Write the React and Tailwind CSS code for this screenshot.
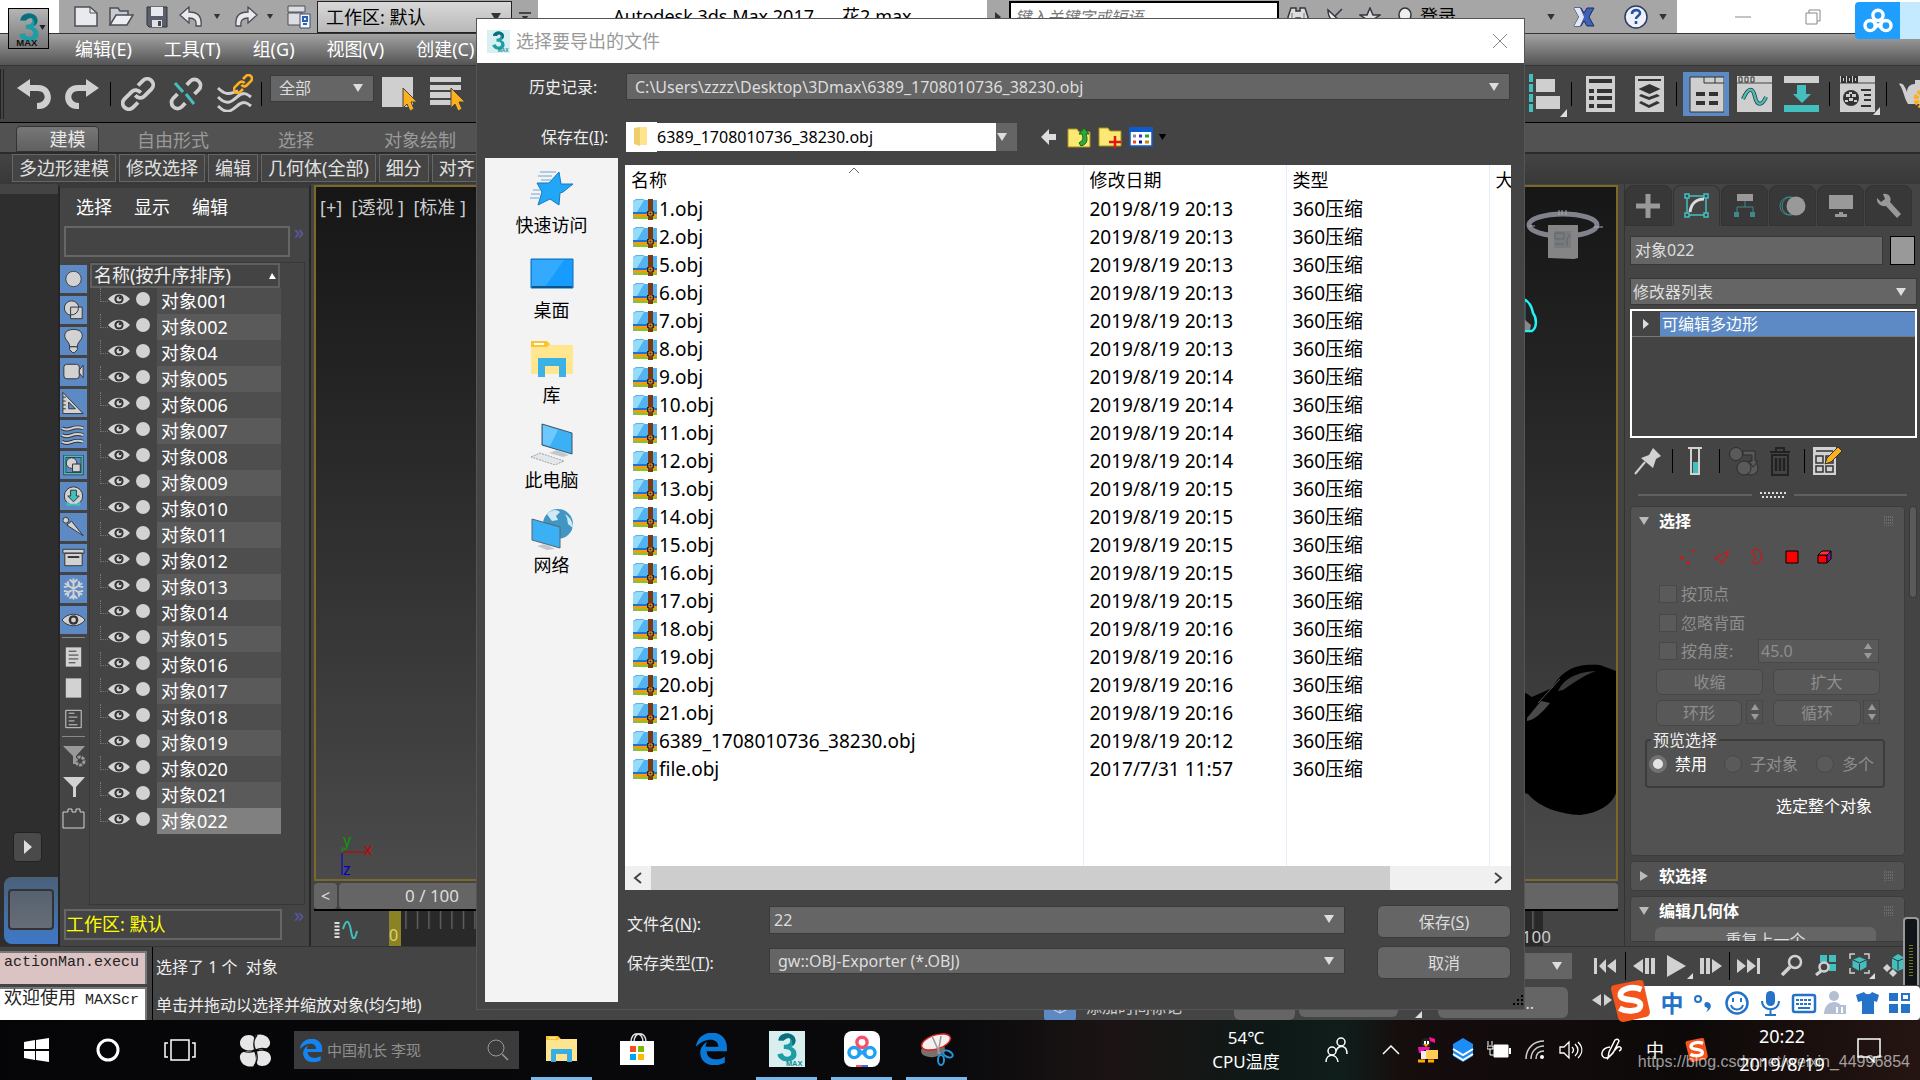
import React, { useState } from "react";

const SANS = "font-['Noto_Sans','Noto_Sans_CJK_SC',sans-serif]";

const objects = ["001", "002", "04", "005", "006", "007", "008", "009", "010", "011", "012", "013", "014", "015", "016", "017", "018", "019", "020", "021", "022"];

const files = [
  ["1.obj", "2019/8/19 20:13"],
  ["2.obj", "2019/8/19 20:13"],
  ["5.obj", "2019/8/19 20:13"],
  ["6.obj", "2019/8/19 20:13"],
  ["7.obj", "2019/8/19 20:13"],
  ["8.obj", "2019/8/19 20:13"],
  ["9.obj", "2019/8/19 20:14"],
  ["10.obj", "2019/8/19 20:14"],
  ["11.obj", "2019/8/19 20:14"],
  ["12.obj", "2019/8/19 20:14"],
  ["13.obj", "2019/8/19 20:15"],
  ["14.obj", "2019/8/19 20:15"],
  ["15.obj", "2019/8/19 20:15"],
  ["16.obj", "2019/8/19 20:15"],
  ["17.obj", "2019/8/19 20:15"],
  ["18.obj", "2019/8/19 20:16"],
  ["19.obj", "2019/8/19 20:16"],
  ["20.obj", "2019/8/19 20:16"],
  ["21.obj", "2019/8/19 20:16"],
  ["6389_1708010736_38230.obj", "2019/8/19 20:12"],
  ["file.obj", "2017/7/31 11:57"],
];

function Svg({ w, h, vb, className = "", children }) {
  return (
    <svg width={w} height={h} viewBox={vb || `0 0 ${w} ${h}`} className={`block shrink-0 ${className}`} fill="none" aria-hidden="true">
      {children}
    </svg>
  );
}

function Tri({ color = "#ddd", w = 10, h = 8, className = "" }) {
  return (
    <Svg w={w} h={h} vb="0 0 10 8" className={className}>
      <path d="M0 0h10L5 8z" fill={color} />
    </Svg>
  );
}

function Combo({ label, value, className = "", textClass = "text-base", pad = "pl-2", arrow = "#ddd" }) {
  return (
    <div className={`relative ${className}`}>
      <select aria-label={label} className={`block h-full w-full appearance-none bg-transparent pr-8 outline-none ${pad} ${textClass}`}>
        <option>{value}</option>
      </select>
      <Tri color={arrow} className="pointer-events-none absolute right-2.5 top-1/2 -mt-1" />
    </div>
  );
}

function MaxLogo({ size, dark }) {
  return (
    <Svg w={size} h={size} vb="0 0 32 34">
      <path d="M8 9C8 0 24 0 24 9c0 4-2 5-4 6 3 1 5 3 5 7 0 9-17 9-18 0l5-1c1 5 8 4 8 0 0-3-3-4-7-4v-4c4 0 6-1 6-4 0-4-5-4-6 0z" fill="#1d9da5" />
      <path d="M8 9C8 0 24 0 24 9c0 2-1 4-3 5 1-7-3-10-8-5z" fill="#0b6f7d" />
      <text x={dark ? "4" : "15"} y="33" fontSize={dark ? "9" : "7"} fontWeight="700" fontFamily="Liberation Sans" fill={dark ? "#111" : "#0f8b93"}>MAX</text>
    </Svg>
  );
}

function Chain({ broken, orange, size = 34 }) {
  const c = orange ? "#fbb01c" : "#cfcfcf";
  return (
    <Svg w={size} h={size} vb="0 0 34 34">
      <g transform="rotate(-45 17 17)" stroke={c} strokeWidth={orange ? "4.500" : "3.800"}>
        {broken ? (
          <path d="M11 11H5a6 6 0 0 0 0 12h5M23 23h6a6 6 0 0 0 0-12h-5" />
        ) : (
          <>
            <path d="M20 18c0-4-2-7-6-7H4a6 6 0 0 0 0 12h7" />
            <path d="M14 16c0 4 2 7 6 7h10a6 6 0 0 0 0-12h-7" />
          </>
        )}
      </g>
      {broken && <path d="M6 6l8 9M17 17l8 10" stroke="#43bfbf" strokeWidth="3" />}
    </Svg>
  );
}

function Cursor() {
  return <path d="M21 12v20l4-4 3 7 4-2-3-7h6z" fill="#fbb01c" stroke="#444" strokeWidth="1" />;
}

function Eye({ w = 22 }) {
  return (
    <Svg w={w} h={12} vb="0 0 22 12">
      <path d="M0 6C6-1 16-1 22 6 16 13 6 13 0 6z" fill="#d4d4d4" />
      <circle cx="11" cy="6" r="4.600" fill="#333" />
      <circle cx="11" cy="6" r="2.500" fill="#d4d4d4" />
      <circle cx="12" cy="5" r="1.300" fill="#333" />
    </Svg>
  );
}

function TitleBar() {
  return (
    <header className="flex h-[34px] items-start justify-between border-b border-[#333] bg-white">
      <div className="flex h-[33px]">
        <div className="relative w-[59px]">
          <button aria-label="应用程序菜单" className="absolute left-2 top-2 z-10 flex h-[41px] w-[41px] items-center justify-center border border-black bg-gradient-to-b from-[#b5b5b5] to-[#777]">
            <MaxLogo size={36} dark />
            <Tri color="#223" w={7} h={5} className="absolute right-0.5 top-4" />
          </button>
        </div>
        <div className="flex items-center bg-[#a6a6a6] pl-3.5">
          <button aria-label="新建" className="w-[35px]">
            <Svg w={25} h={21}><path d="M2 1h15l7 6v13H2z" fill="#e9eaee" stroke="#4d4f56" strokeWidth="1.500" /><path d="M17 1v6h7" stroke="#4d4f56" /></Svg>
          </button>
          <button aria-label="打开" className="w-[38px]">
            <Svg w={26} h={21}><path d="M2 19V2h8l2 3h8v4" fill="#c9cbd2" stroke="#4d4f56" strokeWidth="1.500" /><path d="M2 19l6-10h17l-6 10z" fill="#eceef2" stroke="#4d4f56" strokeWidth="1.500" /></Svg>
          </button>
          <button aria-label="保存" className="w-[33px]">
            <Svg w={22} h={22}><path d="M1 1h20v20H3l-2-2z" fill="#5a5f6b" stroke="#33353b" /><path d="M5 1h12v9H5z" fill="#e9eaee" /><path d="M6 14h10v7H6z" fill="#dfe1e6" /><path d="M12 15h3v5h-3z" fill="#444" /></Svg>
          </button>
          <button aria-label="撤消" className="w-[34px]">
            <Svg w={25} h={22}><path d="M10 1v5c9 0 13 4 12 14h-5c1-6-2-8-7-8v5L1 9z" fill="#e9eaee" stroke="#4d4f56" strokeWidth="1.300" /></Svg>
          </button>
          <Tri color="#333" w={8} h={5} />
          <button aria-label="重做" className="ml-3 w-[33px]">
            <Svg w={25} h={22}><path d="M15 1v5C6 6 2 10 3 20h5c-1-6 2-8 7-8v5l9-8z" fill="#e9eaee" stroke="#4d4f56" strokeWidth="1.300" /></Svg>
          </button>
          <Tri color="#333" w={8} h={5} />
          <button aria-label="项目" className="ml-3 w-[31px]">
            <Svg w={26} h={24}><path d="M2 1h17v6H2zM2 8h14v12H2z" fill="#dcdee3" stroke="#4d4f56" /><path d="M14 9h10v14H14z" fill="#f3f5f9" stroke="#3c4d75" /><path d="M17 12h4v4h-4zM17 19h4" stroke="#2a62b8" strokeWidth="2" /></Svg>
          </button>
          <Combo label="工作区" value="工作区: 默认" arrow="#333" textClass="text-lg text-black" className="h-8 w-[195px] border border-[#222] bg-gradient-to-b from-[#d9d9d9] to-[#b8b8b8]" />
          <div className="flex w-[26px] flex-col items-center gap-0.5">
            <span className="h-0.5 w-3 bg-[#444]" />
            <Tri color="#333" w={10} h={5} />
          </div>
        </div>
      </div>
      <h1 className="whitespace-pre text-[18px] leading-8 text-black">{"Autodesk 3ds Max 2017      花2.max"}</h1>
      <div className="flex h-[33px]">
        <div className="flex items-center bg-[#a6a6a6]">
          <Svg w={22} h={12}><path d="M8 1v10l6-5z" fill="#333" /></Svg>
          <input aria-label="搜索" placeholder="键入关键字或短语" className="h-8 w-[270px] border-2 border-black bg-white px-1 text-base italic placeholder:text-[#777]" />
          <button aria-label="搜索帮助" className="ml-2 w-[39px]">
            <Svg w={22} h={20}><path d="M4 1h5v3h4V1h5l3 9v9h-8v-8H9v8H1v-9z" fill="#ddd" stroke="#33363d" strokeWidth="1.500" /><path d="M5 6v12M17 6v12" stroke="#777" /></Svg>
          </button>
          <button aria-label="通信中心" className="w-[33px]">
            <Svg w={20} h={20}><path d="M2 3c0 9 6 13 14 13zM9 9l7-7" fill="#eee" stroke="#33363d" strokeWidth="1.500" /></Svg>
          </button>
          <button aria-label="收藏夹" className="w-[39px]">
            <Svg w={22} h={20}><path d="M11 1l3 7h7l-6 4 2 7-6-4-6 4 2-7-6-4h7z" fill="#ddd" stroke="#33363d" strokeWidth="1.500" /></Svg>
          </button>
          <Svg w={14} h={20}><ellipse cx="7" cy="8" rx="6" ry="7" fill="#eee" stroke="#33363d" strokeWidth="1.500" /></Svg>
          <button className="ml-2 mr-[91px] text-[18px] text-black">登录</button>
          <Tri color="#333" w={8} h={6} />
          <Svg w={22} h={22} className="ml-[18px]"><path d="M1 2h7l3 5 3-5h7l-5 9 5 9h-7l-3-5-3 5H1l5-9z" fill="#3f63b4" stroke="#1d2d66" /><path d="M1 2h6l4 9-4 9H1l5-9z" fill="#e4e8f3" /></Svg>
          <Svg w={26} h={24} className="ml-[28px]"><circle cx="13" cy="12" r="11" fill="#eef1f7" stroke="#2c3c62" strokeWidth="1.500" /><path d="M9 9c0-5 8-5 8-1 0 3-4 3-4 6M13 16v3" stroke="#2353a8" strokeWidth="2.600" /></Svg>
          <Tri color="#333" w={8} h={6} className="mx-2.5" />
        </div>
        <button aria-label="最小化" className="ml-6 w-[84px] pl-[34px]">
          <Svg w={16} h={2}><path d="M0 1h16" stroke="#888" /></Svg>
        </button>
        <button aria-label="还原" className="mr-[99px] pl-5">
          <Svg w={16} h={16}><path d="M1 4h11v11H1zM4 4V1h11v11h-3" stroke="#888" /></Svg>
        </button>
      </div>
    </header>
  );
}

function MenuBar() {
  return (
    <nav className="flex h-8 items-center gap-8 border-b border-[#333] bg-gradient-to-b from-[#a3a3a3] to-[#555] pl-[75px] text-[18px] text-white">
      {["编辑(E)", "工具(T)", "组(G)", "视图(V)", "创建(C)"].map((m) => (
        <button key={m}>{m}</button>
      ))}
    </nav>
  );
}

function Sep({ className = "" }) {
  return <span className={`h-6 w-px shrink-0 bg-black ${className}`} />;
}

function Toolbar() {
  return (
    <div className="flex h-[57px] items-center justify-between border-b border-black bg-[#444]">
      <div className="flex items-center">
        <span className="h-[50px] w-1 border-x border-[#222]" />
        <button aria-label="撤消" className="ml-3"><Svg w={36} h={32}><path d="M1 10L14 1v6h8c17 0 17 24 1 24h-2v-6c10 0 10-12 1-12h-8v6z" fill="#cfcfcf" /></Svg></button>
        <button aria-label="重做" className="ml-3"><Svg w={36} h={32}><path d="M35 10L22 1v6h-8c-17 0-17 24-1 24h2v-6c-10 0-10-12-1-12h8v6z" fill="#cfcfcf" /></Svg></button>
        <Sep className="mx-2.5" />
        <button aria-label="链接"><Chain /></button>
        <button aria-label="取消链接" className="ml-3.5"><Chain broken /></button>
        <button aria-label="绑定到空间扭曲" className="relative ml-3.5">
          <Svg w={36} h={36}><path d="M1 12c9 9 13 5 20 3M1 21c9 9 13 5 19 0s9-4 14 0M1 30c9 9 13 5 19 0s9-4 14 0" stroke="#cfcfcf" strokeWidth="3" /></Svg>
          <span className="absolute -top-0.5 left-4"><Chain orange size={20} /></span>
        </button>
        <Sep className="mx-2" />
        <Combo label="选择过滤器" value="全部" className="mb-3 h-[27px] w-[104px] border border-[#3a3a3a] bg-[#656565]" textClass="text-base text-[#ddd]" />
        <button aria-label="选择对象" className="ml-2"><Svg w={36} h={36}><path d="M0 1h31v30H0z" fill="#cfcfcf" /><Cursor /></Svg></button>
        <button aria-label="按名称选择" className="ml-3"><Svg w={36} h={36}><path d="M0 1h31v5H0zM0 9h31v5H0zM0 16h26v6H0zM0 24h26v5H0z" fill="#cfcfcf" /><Cursor /></Svg></button>
      </div>
      <div className="flex w-[393px] items-center overflow-hidden">
        <Svg w={40} h={46}><path d="M4 3v38" stroke="#43bfbf" strokeWidth="4" strokeDasharray="8 2" /><path d="M9 8h19v13H9zM9 25h24v13H9z" fill="#cfcfcf" /><path d="M40 38v8h-7z" fill="#ddd" /></Svg>
        <Sep className="ml-1 mr-3.5" />
        <Svg w={29} h={36}><path d="M0 0h29v36H0z" fill="#cfcfcf" /><path d="M3 5h23M3 15h5M11 15h15M3 22h5M11 22h15M3 30h5M11 30h15" stroke="#333" strokeWidth="4" /></Svg>
        <Svg w={29} h={36} className="ml-5"><path d="M0 0h29v36H0z" fill="#cfcfcf" /><path d="M3 4h23" stroke="#333" strokeWidth="2" /><path d="M14.500 8l11 5-11 5-11-5zM4 20l10 4 11-4-3-2-8 3-8-3zM4 27l10 5 11-5-3-2-8 4-8-4z" fill="#333" /></Svg>
        <Sep className="ml-3 mr-1.5" />
        <button aria-label="切换功能区" className="flex h-[56px] w-[46px] shrink-0 items-center justify-center rounded bg-[#5d8ac4] bg-clip-content py-1.5">
          <Svg w={35} h={37}><path d="M1 1h34v35H1z" fill="#cfcfcf" stroke="#333" /><path d="M15 1v6h20M26 1v6" stroke="#333" /><path d="M7 18h9M20 18h9M7 27h9M20 27h9" stroke="#333" strokeWidth="4" /></Svg>
        </button>
        <Svg w={35} h={36} className="ml-2"><path d="M0 0h35v36H0z" fill="#cfcfcf" /><path d="M0 7h35" stroke="#444" /><path d="M2 1h3v5H2zM8 1h3v5H8zM14 1h3v5h-3z" stroke="#333" /><path d="M6 23c6-13 10-11 12-2s7 9 11 0" stroke="#333" strokeWidth="4" /><path d="M6 23c6-13 10-11 12-2s7 9 11 0" stroke="#43bfbf" strokeWidth="2.500" /></Svg>
        <Svg w={35} h={36} className="ml-3"><path d="M0 0h35v7H0z" fill="#cfcfcf" /><path d="M0 29h35v7H0zM13 9h9v9h5l-9 9-9-9h4z" fill="#43bfbf" /></Svg>
        <Sep className="mx-2.5" />
        <Svg w={40} h={42}><path d="M0 3h35v36H0z" fill="#cfcfcf" /><path d="M0 10h35" stroke="#444" /><path d="M2 4h3v5H2zM8 4h3v5H8zM14 4h3v5h-3zM21 17h10M24 22h7M24 27h7M21 33h10" stroke="#333" strokeWidth="2" /><circle cx="11" cy="25" r="8" fill="#333" /><path d="M6 21h4v3H6zM12 21h4v3h-4zM9 25h4v3H9zM5 27h3v2H5zM14 27h3v2h-3zM9 19h3v2H9z" fill="#cfcfcf" /><path d="M40 34v8h-7z" fill="#ddd" /></Svg>
        <Sep className="ml-1.5 mr-3" />
        <Svg w={40} h={36}><path d="M0 8c4-2 6 3 8 8 0-5 3-8 8-8V4h5v4c8 1 12 9 8 20H9C5 22 4 12 0 8z" fill="#cfcfcf" /><circle cx="24" cy="23" r="7" stroke="#fbb01c" strokeWidth="5" strokeDasharray="4 1.500" /></Svg>
      </div>
    </div>
  );
}

function Ribbon() {
  return (
    <div className="bg-[#444] text-[18px]">
      <div className="flex h-[31px] items-end border-b-2 border-[#2b2b2b] bg-[#525252] pl-4 text-[#9a9a9a]">
        <button className="h-[26px] w-[83px] rounded-t border border-[#333] bg-gradient-to-b from-[#777] to-[#606060] pl-5 leading-6 text-[#e8e8e8]">建模</button>
        <div className="flex items-center pl-[38px] leading-6">
          <button className="w-[141px] text-left">自由形式</button>
          <button className="w-[106px] text-left">选择</button>
          <button>对象绘制</button>
        </div>
      </div>
      <div className="flex h-[30px] gap-[3px] bg-gradient-to-b from-[#444] to-[#383838] pl-3 text-[#e0e0e0]">
        {["多边形建模", "修改选择", "编辑", "几何体(全部)", "细分", "对齐"].map((t) => (
          <button key={t} className="h-7 whitespace-nowrap border border-[#666] bg-[#444] px-1.5 leading-6">{t}</button>
        ))}
      </div>
    </div>
  );
}

const filterIcons = [
  <circle key="a" cx="14" cy="14" r="8" fill="#d2d2d2" stroke="#444" />,
  <g key="b" fill="#d2d2d2" stroke="#333"><circle cx="12" cy="12" r="7.500" /><path d="M11 11h12v12H11z" /><path d="M11 19a7 7 0 0 0 8-8" /></g>,
  <g key="c" fill="#d2d2d2" stroke="#333"><path d="M14 2C4 2 4 9 6 12c2 3 4 4 4 8h8c0-4 2-5 4-8 2-3 2-10-8-10z" /><path d="M10 20h8v3l-3 3h-2l-3-3z" /></g>,
  <g key="d" fill="#d2d2d2" stroke="#333"><rect x="4" y="6" width="16" height="15" rx="3" /><path d="M20 12l4-5v13l-4-5z" /></g>,
  <g key="e" fill="#d2d2d2" stroke="#333"><path d="M3 3v22h21zM9 13v7h7z" fillRule="evenodd" /><path d="M3 8h3M3 12h3M3 16h3M3 20h3" /></g>,
  <g key="f"><path d="M2 8c8 5 10-4 22 0M2 15c8 5 10-4 22 0M2 22c8 5 10-4 22 0" stroke="#333" strokeWidth="4" /><path d="M2 8c8 5 10-4 22 0M2 15c8 5 10-4 22 0M2 22c8 5 10-4 22 0" stroke="#d2d2d2" strokeWidth="2" /></g>,
  <g key="g"><path d="M5 5h18v18H5z" stroke="#333" strokeWidth="3" /><path d="M5 5h18v18H5z" stroke="#43bfbf" strokeWidth="1.500" /><circle cx="12" cy="12" r="5.500" fill="#d2d2d2" stroke="#333" /><path d="M13 13h8v8h-8z" fill="#d2d2d2" stroke="#333" /></g>,
  <g key="h"><circle cx="14" cy="14" r="9.500" fill="#d2d2d2" stroke="#333" /><path d="M11 8h6v6h3l-6 6-6-6h3z" fill="#43bfbf" stroke="#333" /><path d="M8 20v3h12v-3" stroke="#43bfbf" strokeWidth="2" /></g>,
  <g key="i" fill="#d2d2d2" stroke="#333"><circle cx="6" cy="7" r="3" /><path d="M7 12l5-4 12 15z" /></g>,
  <g key="j" fill="#d2d2d2" stroke="#333"><path d="M5 9h18v13H5zM3 5h22v4H3z" /><path d="M8 13h12" strokeWidth="2" /></g>,
  <g key="k" stroke="#d2d2d2" strokeWidth="2"><path d="M14 3v22M5 8l18 12M23 8L5 20M10 4l4 4 4-4M10 24l4-4 4 4M4 12l5-1-1-5M24 12l-5-1 1-5M4 16l5 1-1 5M24 16l-5 1 1 5" /></g>,
  <g key="l"><path d="M2 14c6-8 18-8 24 0-6 8-18 8-24 0z" fill="#d2d2d2" stroke="#333" /><circle cx="14" cy="14" r="5" fill="#333" /><circle cx="14" cy="14" r="2.500" fill="#d2d2d2" /></g>,
];

const lowerIcons = [
  <g key="a"><path d="M6 4h16v20H6z" fill="#d2d2d2" /><path d="M9 8h8M9 12h10M9 16h10M9 20h7" stroke="#333" /></g>,
  <path key="b" d="M6 4h16v20H6z" fill="#d2d2d2" />,
  <g key="c"><path d="M6 5h16v18H6z" stroke="#d2d2d2" /><path d="M9 8h6M9 12h9M9 16h6M9 20h9" stroke="#d2d2d2" /></g>,
];

function SceneExplorer() {
  const [selected, setSelected] = useState("022");
  return (
    <aside className="flex w-[253px] shrink-0 flex-col border-x-2 border-t-4 border-[#262626] border-t-[#3a3a3a] bg-[#444] pb-1.5">
      <div className="flex h-[38px] items-center gap-[22px] pl-4 text-[18px] text-white">
        <button>选择</button>
        <button>显示</button>
        <button>编辑</button>
      </div>
      <div className="flex gap-1 pl-1">
        <input aria-label="查找" className="h-[31px] w-[226px] border-2 border-[#666] bg-[#444]" />
        <span className="text-xl leading-3 text-[#5a5aa5]">»</span>
      </div>
      <div className="mt-[5px] flex flex-1">
        <div className="flex w-[27px] shrink-0 flex-col gap-[3px] pt-[3px]">
          {filterIcons.map((icon, i) => (
            <button key={i} aria-label={`显示类别 ${i + 1}`} className="bg-[#5d8ac4]">
              <Svg w={27} h={28} vb="0 0 28 28">{icon}</Svg>
            </button>
          ))}
          <span className="mb-0.5 ml-0.5 h-px w-[23px] bg-[#888]" />
          {lowerIcons.map((icon, i) => (
            <button key={i} aria-label={`选择方式 ${i + 1}`}><Svg w={27} h={28} vb="0 0 28 28">{icon}</Svg></button>
          ))}
          <span className="mb-0.5 ml-0.5 h-px w-[23px] bg-[#888]" />
          <button aria-label="高级过滤器"><Svg w={27} h={28}><path d="M3 4h22l-9 10v8h-3v-8z" fill="#999" /><circle cx="20" cy="19" r="4" stroke="#999" strokeWidth="3" strokeDasharray="3 1" /></Svg></button>
          <button aria-label="过滤器"><Svg w={27} h={28}><path d="M3 4h22l-9 10v10h-3V14z" fill="#d2d2d2" /></Svg></button>
          <button aria-label="配置"><Svg w={27} h={28}><path d="M3 8h5V5h4v3h4V5h4v3h4v16H3z" stroke="#d2d2d2" /></Svg></button>
        </div>
        <div className="ml-0.5 mr-1 flex-1 border border-[#383838]">
          <div className="flex h-[25px] w-[190px] items-center justify-between border-2 border-[#606060] px-0.5 text-[18px] text-[#eee]">
            名称(按升序排序)
            <Svg w={7} h={6}><path d="M0 6h7L3 0z" fill="#fff" /></Svg>
          </div>
          <ul>
            {objects.map((o, i) => (
              <li key={o} className="flex h-[26px]">
                <span className="ml-2.5 h-[14px] w-2 border-b border-l border-dotted border-[#777]" />
                <span className="flex w-[49px] items-center gap-1.5 pb-1"><Eye /><span className="h-3.5 w-3.5 rounded-full bg-[#d2d2d2]" /></span>
                <button
                  onClick={() => setSelected(o)}
                  className={`w-[124px] pl-1 text-left text-[18px] leading-[26px] text-white ${selected === o ? "bg-[#808080]" : i % 2 ? "bg-[#5a5a5a]" : "bg-[#4e4e4e]"}`}
                >
                  对象{o}
                </button>
              </li>
            ))}
          </ul>
        </div>
      </div>
      <div className="mt-1 flex gap-3 pl-1">
        <div className="h-[31px] w-[218px] border-2 border-[#666] text-[18px] leading-[26px] text-[#ffff00]">工作区: 默认</div>
        <span className="text-xl leading-3 text-[#5a5aa5]">»</span>
      </div>
    </aside>
  );
}

function Viewport() {
  return (
    <main className="flex min-w-0 flex-1 flex-col bg-[#444] pl-[3px] pr-[6px] pt-px">
      <section className="relative flex-1 overflow-hidden border-2 border-[#7d6828] bg-gradient-to-b from-[#161616] to-[#4b4b4b]">
        <p className="whitespace-pre pl-1 pt-2 text-[18px] leading-6 text-[#ccc]">{"[+]  [透视 ]  [标准 ]  ["}</p>
        <Svg w={48} h={50} className="absolute bottom-0 left-5">
          <path d="M7 23h22" stroke="#c00" />
          <path d="M6 24v22" stroke="#00c" />
          <path d="M6 23v-5" stroke="#0a9a0a" />
          <text x="7" y="17" fontSize="16" fill="#0a9a0a">y</text>
          <text x="28" y="26" fontSize="16" fill="#c00">x</text>
          <text x="7" y="46" fontSize="16" fill="#00c">z</text>
        </Svg>
        <Svg w={92} h={52} className="absolute right-2 top-5">
          <ellipse cx="47" cy="18" rx="34" ry="11" stroke="#80828c" strokeWidth="5" />
          <path d="M43 8v-5M46 8V3M50 8V3M13 19h6M78 20h9" stroke="#aaa" />
          <path d="M32 18h30v33l-4 1-26-1z" fill="#858585" />
          <path d="M38 24h17v17H38z" fill="#777b80" />
          <path d="M39 26h9v6h-9zM39 37h9M51 39v-7l3-5" stroke="#62666b" />
        </Svg>
        <Svg w={92} h={38} className="absolute right-0 top-[110px]">
          <path d="M0 2c6 3 8 8 9 14 4 5 4 15-1 18H0z" fill="#222" stroke="#21f3f6" strokeWidth="2.500" />
          <path d="M0 22l7 6-1 5H0z" fill="#888" />
        </Svg>
        <Svg w={92} h={156} className="absolute bottom-[60px] right-0">
          <path d="M0 29l8 5 20-9C38 8 50 0 76 2l16 6v122c-4 12-18 20-36 22-20-1-40-7-52-21l-4-1z" fill="#000" />
          <path d="M34 28C42 12 58 9 72 8c-14 5-24 13-33 19z" fill="#3a3a3a" />
          <path d="M3 55l14-17 9 2C18 50 10 57 3 58z" fill="#4a4a4a" />
          <path d="M14 40L36 16" stroke="#555" />
        </Svg>
      </section>
      <div className="mt-0.5 flex h-[26px] gap-0.5 text-base text-[#ddd]">
        <button aria-label="上一帧" className="w-[23px] rounded bg-[#656565]">&lt;</button>
        <div className="flex-1 rounded bg-[#656565] pl-[66px] text-[17px] leading-[26px]">0 / 100</div>
      </div>
      <div className="flex h-[37px] border-t-2 border-black pl-5 pr-[75px]">
        <Svg w={24} h={20} className="mt-2"><path d="M3 3v16" stroke="#ddd" strokeWidth="5" strokeDasharray="2 1.500" /><path d="M9 10c3-10 6-10 8 2s4 8 6 0" stroke="#43bfbf" strokeWidth="2" /></Svg>
        <div className="relative ml-[31px] flex-1 bg-[#292929]">
          <svg className="absolute inset-0 h-full w-full" aria-hidden="true">
            <defs><pattern id="ticks" width="11.500" height="40" patternUnits="userSpaceOnUse"><path d="M5.500 0v18" stroke="#777" /></pattern></defs>
            <rect width="100%" height="100%" fill="url(#ticks)" />
          </svg>
          <span className="absolute left-0 top-0 h-full w-3 bg-[#8a8224] pt-3 text-base text-[#ddd36a]">0</span>
          <span className="absolute -right-2 top-3.5 text-[17px] leading-6 text-[#ccc]">100</span>
        </div>
      </div>
    </main>
  );
}

const panelTabs = [
  <path key="1" d="M13 2v24M1 14h24" stroke="#999" strokeWidth="5" />,
  <g key="2" stroke="#43bfbf" strokeWidth="1.500"><path d="M2 2h4v4H2zM21 2h4v4h-4zM2 21h4v4H2zM21 21h4v4h-4zM6 4h15M4 6v15M23 6v15M6 23h15" /><path d="M7 20C8 12 13 7 21 7" stroke="#ddd" strokeWidth="3" /></g>,
  <g key="3"><path d="M6 2h16v7H6z" fill="#999" /><path d="M14 9v6M6 20v-5h16v5" stroke="#3c8a8a" /><path d="M3 20h5v5H3zM19 20h5v5h-5z" fill="#3c8a8a" /></g>,
  <g key="4"><circle cx="10" cy="14" r="9" stroke="#3c8a8a" /><circle cx="12" cy="14" r="9" stroke="#3c8a8a" /><circle cx="17" cy="14" r="9.500" fill="#999" /></g>,
  <path key="5" d="M2 3h24v14H2zM8 22h12v3H8zM12 20h4v3h-4z" fill="#999" />,
  <path key="6" d="M2 6l4 4 4-3-2-5c6-1 9 4 7 8l11 12-4 4-11-12C6 15 1 11 2 6z" fill="#999" />,
];

function RolloutHead({ title, open }) {
  return (
    <div className="flex h-7 items-center pl-2 pr-2.5">
      <Svg w={10} h={10}><path d={open ? "M0 1h10L5 9z" : "M1 0v10l8-5z"} fill="#bbb" /></Svg>
      <h2 className="ml-2.5 flex-1 text-base font-bold text-white">{title}</h2>
      <Svg w={10} h={10}><path d="M0 1h10M0 4h10M0 7h10M0 10h10" stroke="#888" strokeDasharray="1 1" /></Svg>
    </div>
  );
}

function Spinner() {
  return (
    <Svg w={8} h={16}><path d="M4 0l4 6H0zM4 16l4-6H0z" fill="#999" /></Svg>
  );
}

function CommandPanel() {
  const check = "h-[18px] w-[18px] appearance-none border border-[#484848] bg-[#5a5a5a]";
  const radio = "h-[18px] w-[18px] appearance-none rounded-full border border-[#484848] bg-[#5a5a5a] checked:border-4 checked:border-[#727272] checked:bg-[#e4e4e4]";
  const btn = "h-[26px] rounded-md border border-[#474747] bg-[#585858] text-base leading-none text-[#8e8e8e]";
  return (
    <aside className="flex h-[762px] w-[296px] shrink-0 flex-col overflow-hidden border-l border-[#333] bg-[#444]">
      <div className="flex h-[42px] gap-px pt-px">
        {panelTabs.map((t, i) => (
          <button key={i} aria-label={`面板 ${i + 1}`} className={`flex w-[47px] justify-center rounded-t-lg border border-[#333] pt-1.5 ${i === 1 ? "border-b-0 bg-[#444]" : "bg-[#383838]"}`}>
            <Svg w={27} h={27}>{t}</Svg>
          </button>
        ))}
      </div>
      <div className="flex justify-between pl-[5px] pr-[5px] pt-2.5">
        <input aria-label="对象名称" defaultValue="对象022" className="h-[29px] w-[253px] border border-[#383838] bg-[#656565] px-1 pb-1 text-base text-[#ddd]" />
        <button aria-label="对象颜色" className="h-[29px] w-[25px] border border-black bg-[#999]" />
      </div>
      <Combo label="修改器列表" value="修改器列表" pad="pl-0.5" className="ml-[5px] mr-[3px] mt-[13px] h-[27px] border border-[#383838] bg-[#656565]" textClass="text-base text-[#ddd]" />
      <ul className="ml-[5px] mr-[3px] mt-1 h-[129px] shrink-0 border-2 border-white">
        <li className="flex h-[26px] items-center border-b border-[#777]">
          <Svg w={28} h={12}><path d="M11 1v10l6-5z" fill="#ddd" /></Svg>
          <button className="h-6 flex-1 bg-[#5d8ac4] pl-0.5 text-left text-base leading-6 text-white">可编辑多边形</button>
        </li>
      </ul>
      <div className="flex h-[46px] items-center pl-[9px]">
        <Svg w={28} h={28}><path d="M1 27l10-12" stroke="#d2d2d2" strokeWidth="2" /><path d="M19 1l8 8-5 3-3 9-12-10 8-3z" fill="#d2d2d2" /></Svg>
        <Sep className="ml-2.5 mr-2 h-4" />
        <Svg w={28} h={30}><path d="M7 2h14M10 2v26h8V2" stroke="#d2d2d2" strokeWidth="2" /><path d="M12 16h5v11h-5z" fill="#43bfbf" /></Svg>
        <Sep className="ml-2.5 mr-2 h-4" />
        <Svg w={32} h={30}><g fill="#5a5a5a" stroke="#2c2c2c"><circle cx="8" cy="8" r="6.500" /><circle cx="23" cy="22" r="7" /><circle cx="16" cy="22" r="7" /><path d="M15 5h12v10h3l-5 6-4-6h3V9h-9z" /></g></Svg>
        <Svg w={24} h={30} className="ml-2"><path d="M2 6h20M8 5V2h8v3M4 9h16v20H4z" fill="#444" stroke="#222" strokeWidth="2" /><path d="M8 12v13M12 12v13M16 12v13" stroke="#222" strokeWidth="2.500" /></Svg>
        <Sep className="ml-3 mr-2 h-4" />
        <Svg w={32} h={30}><path d="M0 1h23v28H0z" fill="#d2d2d2" /><path d="M3 5h17M3 10h7v7H3zM13 10h7v7h-7zM3 20h7v6H3zM13 20h7v6h-7z" stroke="#333" strokeWidth="1.500" /><path d="M12 18l2-6L25 1l4 4-11 11z" fill="#fbb01c" stroke="#333" /></Svg>
      </div>
      <div className="flex h-[22px] items-center gap-2 px-[13px]">
        <span className="h-0.5 flex-1 bg-[#606060]" />
        <Svg w={26} h={6}><path d="M0 1h26M2 5h24" stroke="#ddd" strokeWidth="2" strokeDasharray="2 2" /></Svg>
        <span className="h-0.5 flex-1 bg-[#606060]" />
      </div>
      <div className="flex min-h-0 flex-1 gap-1 pl-[5px]">
        <div className="flex w-[275px] flex-col gap-[5px]">
          <section className="h-[350px] shrink-0 rounded border border-[#3c3c3c] bg-[#525252]">
            <RolloutHead title="选择" open />
            <div className="flex h-[42px] items-center gap-[18px] pl-[49px] pt-0.5">
              <Svg w={16} h={16}><path d="M13 1v2M12 2h3M2 7v4M0 9h4M8 12v4M6 14h4" stroke="#f00" /></Svg>
              <Svg w={17} h={16}><path d="M1 9L15 2l-6 12z" stroke="#f00" /></Svg>
              <Svg w={14} h={18}><path d="M4 2c8-3 10 4 8 10-2 6-9 4-8 1 1-2 3-2 2-5-3-1-5-3-2-6z" stroke="#f00" /></Svg>
              <Svg w={14} h={14} className="ml-1"><path d="M1 1h12v12H1z" fill="#f00" stroke="#000" /></Svg>
              <Svg w={15} h={14}><path d="M1 5h9v8H1z" fill="#f00" stroke="#000" /><path d="M1 5l4-4h9l-4 4z" fill="#f33" stroke="#000" /><path d="M10 5l4-4v8l-4 4z" fill="#80108f" stroke="#000" /></Svg>
            </div>
            <div className="flex flex-col pl-7 pt-0.5 text-base text-[#8e8e8e]">
              <label className="flex h-[29px] items-center gap-1"><input type="checkbox" className={check} />按顶点</label>
              <label className="flex h-[29px] items-center gap-1"><input type="checkbox" className={check} />忽略背面</label>
              <div className="flex h-[28px] items-center">
                <label className="flex w-[99px] items-center gap-1"><input type="checkbox" className={check} />按角度:</label>
                <div className="flex h-6 w-[121px] items-center justify-between border border-[#484848] bg-[#5a5a5a] pl-0.5 pr-1.5">
                  <input aria-label="角度" defaultValue="45.0" className="w-20 bg-transparent text-base leading-5" />
                  <Spinner />
                </div>
              </div>
            </div>
            <div className="mt-1 flex gap-2.5 pl-[25px]">
              <button className={`w-[107px] ${btn}`}>收缩</button>
              <button className={`w-[107px] ${btn}`}>扩大</button>
            </div>
            <div className="mt-[5px] flex items-start pl-[25px]">
              <button className={`w-[86px] ${btn}`}>环形</button>
              <button aria-label="环形移动" className="ml-1 flex h-6 w-[17px] items-center justify-center border border-[#484848]"><Spinner /></button>
              <button className={`ml-2.5 w-[88px] ${btn}`}>循环</button>
              <button aria-label="循环移动" className="ml-0.5 flex h-6 w-[17px] items-center justify-center border border-[#484848]"><Spinner /></button>
            </div>
            <fieldset className="ml-3.5 mt-0.5 h-[60px] w-[240px] rounded border-2 border-[#3c3c3c] text-base">
              <legend className="ml-1 px-0.5 leading-6 text-[#eee]">预览选择</legend>
              <div className="flex items-center pl-0.5 text-[#8e8e8e]">
                <label className="flex w-[75px] items-center gap-2 text-white"><input type="radio" name="preview" defaultChecked className={radio} />禁用</label>
                <label className="flex w-[92px] items-center gap-2"><input type="radio" name="preview" className={radio} />子对象</label>
                <label className="flex items-center gap-2"><input type="radio" name="preview" className={radio} />多个</label>
              </div>
            </fieldset>
            <p className="pr-8 pt-1.5 text-right text-base text-white">选定整个对象</p>
          </section>
          <section className="h-[30px] shrink-0 rounded border border-[#3c3c3c] bg-[#525252]"><RolloutHead title="软选择" /></section>
          <section className="h-[46px] shrink-0 overflow-hidden rounded-t border border-[#3c3c3c] bg-[#525252]">
            <RolloutHead title="编辑几何体" open />
            <button className="mx-6 mt-0.5 block h-[26px] w-[221px] rounded-md bg-[#656565] text-base leading-5 text-[#ddd]">重复上一个</button>
          </section>
        </div>
        <span className="h-[92px] w-2 rounded border border-[#383838] bg-[#5a5a5a]" />
      </div>
    </aside>
  );
}

function Workspace() {
  return (
    <div className="flex flex-1 bg-[#444]">
      <div className="flex w-[58px] shrink-0 flex-col justify-end border-t-[10px] border-[#444] bg-[#2e2e2e]">
        <button aria-label="播放" className="mb-[15px] ml-[13px] flex h-[30px] w-[29px] items-center justify-center rounded border border-[#222] bg-[#4a4a4a]">
          <Svg w={8} h={14}><path d="M0 0v14l8-7z" fill="#ddd" /></Svg>
        </button>
        <div className="mb-0.5 ml-1 rounded-l-lg bg-gradient-to-b from-[#4a6078] to-[#3f78c8] p-1 pb-3.5 pt-3">
          <div className="h-[41px] w-[46px] rounded border-2 border-[#333] bg-gradient-to-b from-[#57616f] to-[#666d77]" />
        </div>
      </div>
      <SceneExplorer />
      <Viewport />
      <CommandPanel />
    </div>
  );
}

function PlayIcon({ d, w = 24 }) {
  return <Svg w={w} h={22}><path d={d} fill="#d2d2d2" /></Svg>;
}

function StatusBar() {
  return (
    <footer className="flex h-[74px] items-stretch border-t border-[#333] bg-[#444] text-base text-[#eee]">
      <div className="flex w-[147px] flex-col gap-[3px] overflow-hidden pt-1 font-['Liberation_Mono','Noto_Sans_CJK_SC',monospace] text-[15px] text-[#222]">
        <div className="h-[33px] whitespace-nowrap border-r-2 border-t-2 border-[#777] bg-[#dcc3c3] pl-1 leading-5">actionMan.execu</div>
        <div className="h-[33px] whitespace-nowrap border-r-2 border-t-2 border-[#777] bg-white pl-1 leading-5"><span className="text-lg leading-5">欢迎使用</span> MAXScr</div>
      </div>
      <span className="ml-[5px] w-1 border-l border-black" />
      <div className="flex-1 pt-2">
        <p className="h-[38px] whitespace-pre leading-6">{"选择了 1 个  对象"}</p>
        <p className="leading-6">单击并拖动以选择并缩放对象(均匀地)</p>
      </div>
      <div className="flex w-[876px] flex-col gap-2 overflow-hidden pt-[5px]">
        <div className="flex h-[27px] items-center">
          <Combo label="时间标记" value="" className="ml-[419px] h-[26px] w-[109px] bg-[#656565]" />
          <span className="ml-[22px]"><PlayIcon d="M0 3h3v16H0zM12 4v14l-7-7zM22 4v14l-9-7z" /></span>
          <Sep className="mx-[7px] h-7" />
          <PlayIcon w={22} d="M10 4v14L0 11zM12 3h4v16h-4zM18 3h4v16h-4z" />
          <Svg w={26} h={28} className="ml-3"><path d="M0 3v22l19-11z" fill="#d2d2d2" /><path d="M26 21v6h-6z" fill="#ddd" /></Svg>
          <span className="ml-[7px]"><PlayIcon w={22} d="M0 3h4v16H0zM6 3h4v16H6zM12 4v14l10-7z" /></span>
          <Sep className="mx-[7px] h-7" />
          <PlayIcon d="M0 4v14l9-7zM10 4v14l9-7zM20 3h3v16h-3z" />
          <Svg w={22} h={24} className="ml-5"><circle cx="14" cy="8" r="6" stroke="#d2d2d2" strokeWidth="2.500" /><path d="M9 13l-8 8" stroke="#d2d2d2" strokeWidth="3.500" /></Svg>
          <Svg w={24} h={24} className="ml-3"><path d="M5 1h7v7H5zM14 1h7v7h-7zM14 10h7v7h-7z" fill="#43bfbf" /><circle cx="9" cy="13" r="4.500" fill="#444" stroke="#d2d2d2" strokeWidth="2.500" /><path d="M6 17l-5 4" stroke="#d2d2d2" strokeWidth="3" /></Svg>
          <Svg w={26} h={26} className="ml-2.5"><path d="M1 6V1h5M15 1h5v5M20 17v3h-5M6 20H1v-5" stroke="#d2d2d2" strokeWidth="1.500" /><path d="M10.500 4l7 3v7l-7 4-7-4V7z" fill="#43bfbf" /><path d="M4 7l6.500 3L17 7M10.500 11v7" stroke="#333" /><path d="M26 20v6h-6z" fill="#ddd" /></Svg>
          <Svg w={24} h={24} className="ml-2"><path d="M0 14l4-4 4 4-4 4zM6 19l4-4 4 4-4 4z" fill="#d2d2d2" /><path d="M9 4l6-4 7 4v10l-7 3-6-3z" fill="#43bfbf" /><path d="M9 4l6 3 7-3M15 7v9" stroke="#333" /></Svg>
        </div>
        <div className="flex h-[33px] items-start">
          <span className="flex h-[34px] w-8 items-center justify-center rounded bg-[#5d8ac4]"><Svg w={18} h={20}><path d="M1 5l8-4 8 4v10l-8 4-8-4zM1 5l8 5 8-5M9 10v9" stroke="#ddd" /></Svg></span>
          <span className="w-[148px] pl-2.5 leading-10 text-[#ccc]">添加时间标记</span>
          <button className="ml-2.5 h-[33px] w-[61px] rounded-md bg-[#656565]">{" "}</button>
          <button className="ml-1 h-[30px] w-[99px] rounded-md bg-[#656565]">{" "}</button>
          <Svg w={30} h={32}><path d="M24 24v7h-7z" fill="#ddd" /></Svg>
          <button className="ml-2.5 h-[31px] w-[130px] rounded-md bg-[#656565] pr-[34px] text-right text-[#ddd]">..</button>
          <Svg w={40} h={22} className="ml-6 mt-1"><path d="M9 3v12L0 9zM12 3v12l8-6z" fill="#d2d2d2" /></Svg>
        </div>
      </div>
    </footer>
  );
}

function FileIcon() {
  return (
    <Svg w={24} h={22}>
      <path d="M0 3l3-2h7l2 1h12v19H0z" fill="#52b3f0" />
      <path d="M1 3l3-1h7L4 14H0V4z" fill="#96dcf8" />
      <path d="M0 14h24v2H0z" fill="#1d74cf" />
      <path d="M0 16h24v3H0z" fill="#f39a14" />
      <path d="M1 19h23v2H2z" fill="#7ccb2b" />
      <path d="M15 1h5v21h-5z" fill="#7b3a12" />
      <path d="M14 13h7v5h-7z" fill="#4a1f08" />
      <path d="M16 14h3v3h-3z" stroke="#e8b04c" />
    </Svg>
  );
}

const places = [
  ["快速访问", <g key="q"><path d="M30 4l2 12h12L34 24l-3 1-1 12-9-6-12 6 4-13-5-9 12 0z" fill="#22a6f6" stroke="#1579c8" /><path d="M11 4h16M9 8h14M12 12h10M4 22h8M2 26h9M1 30h9" stroke="#6aa7d6" /></g>],
  ["桌面", <g key="d"><path d="M2 6h42v29H2z" fill="#169bff" stroke="#0b6fb5" /><path d="M3 7h32L16 34H3z" fill="#34aaff" /><path d="M3 34h40" stroke="#0a5590" strokeWidth="2" /></g>],
  ["库", <g key="l"><path d="M2 4h16l4 3h22v29H2z" fill="#ffe68f" /><path d="M2 3h16l3 3-3 3H2z" fill="#fbc52f" /><path d="M5 6h10" stroke="#fff" strokeWidth="2" /><path d="M9 39V20h28v19h-7V28H16v11z" fill="#3bb2e6" /></g>],
  ["此电脑", <g key="p"><path d="M13 1l30 9v21l-30-9z" fill="#3cb0f5" stroke="#45535e" /><path d="M14 2l15 5-8 16-7-2z" fill="#6cc8ff" /><path d="M20 30l8-3 12 5-6 2z" fill="#c0c7cd" /><path d="M2 34l9-4 24 8-9 4z" fill="#e4e7ea" stroke="#9aa3aa" strokeDasharray="2 1" /></g>],
  ["网络", <g key="n"><circle cx="29" cy="16" r="15" fill="#4296c4" /><path d="M18 6c6-6 11-4 13-2l-4 4 2 4-6 1-3-4zM36 6c6 4 8 9 8 14l-5-4-1-6z" fill="#cfeaf4" /><path d="M3 11l28 8v21L3 32z" fill="#3cb0f5" stroke="#56646e" /><path d="M8 38l8-2 10 5-8 1z" fill="#c0c7cd" /></g>],
];

function SaveDialog() {
  const label = "text-base text-[#eee]";
  const field = "border border-[#3a3a3a] bg-[#656565]";
  const th = "h-[30px] whitespace-nowrap border-r border-[#e5eef8] px-1.5 text-left text-[18px] font-normal";
  const td = "whitespace-nowrap border-r border-[#e5eef8] px-1.5";
  return (
    <div role="dialog" aria-label="选择要导出的文件" className="absolute bottom-[70px] left-[476px] right-[395px] top-[18px] z-20 flex flex-col border border-[#555] bg-[#444]">
      <div className="flex h-[44px] items-center bg-white px-2.5">
        <span className="bg-[#d9f0f1]"><MaxLogo size={23} /></span>
        <h2 className="ml-1.5 flex-1 text-[18px] text-[#999]">选择要导出的文件</h2>
        <button aria-label="关闭" className="pr-1.5"><Svg w={16} h={16}><path d="M1 1l14 14M15 1L1 15" stroke="#888" /></Svg></button>
      </div>
      <div className="flex items-center pr-3.5 pt-2.5">
        <span className={`w-[149px] pl-[52px] ${label}`}>历史记录:</span>
        <Combo label="历史记录" value="C:\Users\zzzz\Desktop\3Dmax\6389_1708010736_38230.obj" className={`h-[27px] flex-1 ${field}`} textClass="text-base text-[#ddd]" />
      </div>
      <div className="mt-[22px] flex items-center">
        <span className={`w-[149px] pl-[64px] ${label}`}>保存在(<u>I</u>):</span>
        <div className="flex h-[30px] w-[391px] items-center bg-white">
          <Svg w={31} h={22}><path d="M8 2l6-1v19l-6-2z" fill="#f0cf6b" /><path d="M14 1h7v18h-7z" fill="#ffe38d" /></Svg>
          <Combo label="保存在" value="6389_1708010736_38230.obj" pad="pl-0" className="h-full flex-1 border-y border-[#444] bg-[linear-gradient(to_left,#656565_21px,#fff_21px)]" textClass="text-base text-black" />
        </div>
        <button aria-label="返回" className="ml-6"><Svg w={16} h={16}><path d="M8 0v5h7v6H8v5L0 8z" fill="#ddd" /></Svg></button>
        <button aria-label="向上一级" className="ml-2.5"><Svg w={25} h={22}><path d="M1 3h9l2 3h11v15H1z" fill="#fbe974" stroke="#a98f1e" /><path d="M14 20c8-2 6-9 5-12h3l-5-6-5 6h3c2 5 0 7-3 9z" fill="#2fa83c" stroke="#0e6518" /></Svg></button>
        <button aria-label="新建文件夹" className="ml-1.5"><Svg w={25} h={24}><path d="M1 3h9l2 3h11v15H1z" fill="#fbe974" stroke="#a98f1e" /><path d="M17 11v12M11 17h12" stroke="#e21414" strokeWidth="2.500" /></Svg></button>
        <button aria-label="查看" className="ml-1.5 flex items-center gap-1">
          <Svg w={24} h={20}><path d="M1 1h22v18H1z" fill="#fff" stroke="#0c5cd0" strokeWidth="1.500" /><path d="M0 0h24v5H0z" fill="#0c5cd0" /><path d="M4 9h3" stroke="#88a" strokeWidth="3" /><path d="M10 9h3" stroke="#33d" strokeWidth="3" /><path d="M16 9h4" stroke="#2d9d3a" strokeWidth="3" /><path d="M4 15h3" stroke="#e42" strokeWidth="3" /><path d="M10 15h3" stroke="#119" strokeWidth="3" /><path d="M16 15h4" stroke="#c80" strokeWidth="3" /></Svg>
          <Tri color="#000" w={11} h={6} />
        </button>
      </div>
      <div className="flex min-h-0 flex-1 pb-[7px] pl-2 pr-[13px] pt-1.5">
        <nav className="flex w-[133px] shrink-0 flex-col items-center gap-3.5 bg-[#f3f3f3] pt-2.5">
          {places.map(([name, icon]) => (
            <button key={name} className="flex h-[71px] flex-col items-center justify-between text-[18px] leading-7 text-black">
              <Svg w={46} h={42}>{icon}</Svg>
              {name}
            </button>
          ))}
        </nav>
        <div className="ml-[7px] flex min-w-0 flex-1 flex-col pt-[7px]">
          <div className="relative h-[701px] overflow-hidden bg-white text-black">
            <Svg w={12} h={6} className="absolute left-[223px] top-0.5"><path d="M1 6l5-5 5 5" stroke="#666" /></Svg>
            <table className="h-full w-full table-fixed border-collapse">
              <colgroup>
                <col />
                <col className="w-[203px]" />
                <col className="w-[203px]" />
                <col className="w-[22px]" />
              </colgroup>
              <thead>
                <tr>
                  <th className={th}>名称</th>
                  <th className={th}>修改日期</th>
                  <th className={th}>类型</th>
                  <th className="overflow-hidden whitespace-nowrap pl-1.5 text-left text-[18px] font-normal">大</th>
                </tr>
              </thead>
              <tbody className="text-[19px] leading-7">
                {files.map(([name, date]) => (
                  <tr key={name} className="h-7">
                    <td className="whitespace-nowrap border-r border-[#e5eef8] pl-2"><span className="flex items-center gap-0.5"><FileIcon />{name}</span></td>
                    <td className={td}>{date}</td>
                    <td className={td}>360压缩</td>
                    <td />
                  </tr>
                ))}
                <tr className="h-full">
                  <td className={td} /><td className={td} /><td className={td} /><td />
                </tr>
              </tbody>
            </table>
          </div>
          <div className="flex h-6 items-center bg-[#f0f0f0] px-2">
            <Svg w={18} h={12}><path d="M8 1L2 6l6 5" stroke="#444" strokeWidth="2" /></Svg>
            <span className="h-full w-[739px] bg-[#cdcdcd]" />
            <span className="flex-1" />
            <Svg w={10} h={12}><path d="M2 1l6 5-6 5" stroke="#444" strokeWidth="2" /></Svg>
          </div>
          <div className="grid grid-cols-[144px_1fr_134px] items-center gap-y-2 pt-[15px]">
            <label htmlFor="fname" className={`pl-0.5 pt-1 ${label}`}>文件名(<u>N</u>):</label>
            <div className={`relative mb-1 mr-8 h-7 ${field}`}>
              <input id="fname" defaultValue="22" className="h-full w-full bg-transparent pl-1 text-base text-[#ddd]" />
              <Tri className="absolute right-2.5 top-2" />
            </div>
            <button className="h-[33px] rounded-md border border-[#3a3a3a] bg-[#656565] text-base text-[#ddd]">保存(<u>S</u>)</button>
            <span className={`pl-0.5 ${label}`}>保存类型(<u>T</u>):</span>
            <Combo label="保存类型" value="gw::OBJ-Exporter (*.OBJ)" className={`mb-1 mr-8 h-[26px] ${field}`} textClass="text-base text-[#ddd]" />
            <button className="h-[33px] rounded-md border border-[#3a3a3a] bg-[#656565] text-base text-[#ddd]">取消</button>
          </div>
        </div>
      </div>
      <Svg w={12} h={12} className="absolute bottom-0.5 right-0"><path d="M9 1h2M5 5h6M1 9h10" stroke="#000" strokeWidth="2" strokeDasharray="2 2" /></Svg>
    </div>
  );
}

function SogouS({ size }) {
  return (
    <Svg w={size} h={size} vb="0 0 40 40">
      <path d="M3 5L28 0c3 0 4 1 4 3l6 27c0 3-1 4-3 5l-22 5c-3 0-4-1-5-3L1 9c0-2 0-3 2-4z" fill="#f2541b" />
      <path d="M30 9C20 5 9 9 10 15c2 6 19 2 19 9 0 6-13 7-20 3" stroke="#fff" strokeWidth="5.500" />
    </Svg>
  );
}

function ImeBar() {
  const b = "#2473c8";
  return (
    <div className="absolute bottom-[60px] right-0 z-30 flex h-[34px] w-[300px] items-center rounded bg-white pl-[34px]">
      <span className="absolute -left-2.5 -top-1.5"><SogouS size={42} /></span>
      <button className="w-9 text-center text-[23px] font-bold leading-none text-[#2473c8]">中</button>
      <Svg w={30} h={24}><circle cx="8" cy="8" r="3" stroke={b} strokeWidth="2" /><path d="M16 11c7 0 6 8 0 10 3-4 2-4-1-5-1-2-1-4 1-5z" fill={b} /></Svg>
      <Svg w={34} h={26}><circle cx="17" cy="13" r="10.500" stroke={b} strokeWidth="2.500" /><path d="M13 8v4M21 8v4M11 15c2 6 10 6 12 0" stroke={b} strokeWidth="2" /></Svg>
      <Svg w={34} h={26}><rect x="12" y="1" width="9" height="15" rx="4.500" fill={b} /><path d="M8 11c0 11 17 11 17 0M16.500 19v5M11 25h11" stroke={b} strokeWidth="2" /></Svg>
      <Svg w={34} h={24}><rect x="5" y="4" width="22" height="17" rx="2" stroke={b} strokeWidth="2.500" /><path d="M8 9h16M8 13h16" stroke={b} strokeWidth="2" strokeDasharray="3 1" /><path d="M10 17h12" stroke={b} strokeWidth="2" /></Svg>
      <Svg w={34} h={26}><circle cx="12" cy="6" r="5" fill="#b4bfd4" /><path d="M2 24c0-16 20-16 20 0z" fill="#b4bfd4" /><path d="M12 15h12v9H12z" fill="#b4bfd4" /><path d="M15 17v6M20 17v6" stroke="#fff" strokeWidth="2" /></Svg>
      <Svg w={32} h={26}><path d="M8 2c2 3 6 3 8 0l7 3-2 7-3-1v13H6V11l-4 1-2-7z" fill={b} /></Svg>
      <Svg w={26} h={24}><path d="M1 2h9v8H1zM1 13h9v9H1zM13 13h9v9h-9z" fill={b} /><path d="M14 3h7v6h-7z" stroke={b} strokeWidth="2" /></Svg>
    </div>
  );
}

function EdgeE({ size, color = "#0a78d7" }) {
  return (
    <Svg w={size} h={size} vb="0 0 30 30">
      <path d="M0 13C1-4 29-6 29 14v3H10c0 8 11 10 17 5v6C17 33 4 30 4 18c0-4 3-8 7-10-1 1-2 3-2 5h12c0-9-13-9-21 0z" fill={color} />
    </Svg>
  );
}

function BaiduMark({ size, mono }) {
  const blue = mono ? "#fff" : "#22a0f2";
  return (
    <Svg w={size} h={size} vb="0 0 30 30">
      <g strokeWidth="3">
        <circle cx="8" cy="19" r="4.500" stroke={blue} />
        <circle cx="22" cy="19" r="4.500" stroke={blue} />
        <circle cx="15" cy="10" r="4.500" stroke={mono ? "#fff" : "#f4516c"} />
        <path d="M12 16l7 7M18 16l-7 7" stroke={blue} strokeWidth="2" />
      </g>
    </Svg>
  );
}

function TaskApp({ label, active, children }) {
  return (
    <button aria-label={label} className="flex w-[75px] flex-col items-center justify-between">
      <span className="flex flex-1 items-center">{children}</span>
      <span className={`h-[3px] w-[61px] ${active ? "bg-[#76b9ed]" : ""}`} />
    </button>
  );
}

function Taskbar() {
  const tray = "flex w-[36px] items-center justify-center";
  return (
    <div className="relative flex h-[60px] bg-[linear-gradient(90deg,#050507_0%,#0a0a0c_50%,#1c1414_58%,#0e1917_66%,#0f1d1b_70%,#160d0d_73%,#0d0909_88%,#251512_100%)] text-white">
      <button aria-label="开始" className="flex w-[72px] items-center justify-center"><Svg w={25} h={24}><path d="M0 4l11-2v9H0zM12 2l13-2v11H12zM0 13h11v9L0 20zM12 13h13v11l-13-2z" fill="#fff" /></Svg></button>
      <button aria-label="Cortana" className="flex w-[72px] items-center justify-center"><Svg w={24} h={24}><circle cx="12" cy="12" r="10" stroke="#fff" strokeWidth="3" /></Svg></button>
      <button aria-label="任务视图" className="flex w-[72px] items-center justify-center"><Svg w={32} h={22}><path d="M7 1h18v20H7zM4 4H1v14h3M28 4h3v14h-3" stroke="#fff" strokeWidth="1.500" /></Svg></button>
      <button aria-label="浏览器" className="flex w-[78px] items-center justify-center">
        <Svg w={33} h={33}><g fill="#e6e6e6"><path d="M1 9c0-6 7-10 13-7 3 4 1 8 2 13-6 3-15 1-15-6z" /><path d="M17 1c6-2 13 1 14 7 1 6-6 8-14 8-2-5-3-10 0-15z" /><path d="M32 24c0 6-7 10-13 7-3-4-1-8-2-13 6-3 15-1 15 6z" /><path d="M15 32C9 34 2 31 1 24c-1-6 6-8 14-7 2 5 3 10 0 15z" /></g><path d="M16 16C14 10 14 6 18 1M17 16c6-3 10-2 15 2M17 17c2 6 2 10-2 15M16 17c-6 2-10 2-15-2" stroke="#111" strokeWidth="1.500" /></Svg>
      </button>
      <div className="mt-[11px] flex h-[38px] w-[225px] items-center bg-[#3b3b3b] pl-1.5 pr-2.5">
        <EdgeE size={23} color="#1583f0" />
        <input aria-label="搜索" placeholder="中国机长 李现" className="ml-1 w-0 flex-1 bg-transparent text-[15px] placeholder:text-[#8f8f8f]" />
        <Svg w={22} h={22}><circle cx="9" cy="9" r="8" stroke="#999" /><path d="M15 15l6 6" stroke="#999" strokeWidth="1.500" /></Svg>
      </div>
      <div className="ml-[5px] flex">
        <TaskApp label="文件资源管理器" active><Svg w={33} h={28}><path d="M1 2h12l3 2h16v22H1z" fill="#ffe490" /><path d="M1 1h12l2 2-2 2H1z" fill="#fbc52f" /><path d="M4 3h7" stroke="#fff" /><path d="M6 27V15q0-1 1-1h19q1 0 1 1v12h-5v-8H11v8z" fill="#35aee4" /></Svg></TaskApp>
        <TaskApp label="商店"><Svg w={36} h={34}><path d="M12 10c0-11 12-11 12 0M15 10c0-11 12-11 12 0" stroke="#ddd" strokeWidth="1.500" /><path d="M1 9h34v24H1z" fill="#fff" /><path d="M11 14h6v6h-6z" fill="#f25022" /><path d="M19 14h6v6h-6z" fill="#7fba00" /><path d="M11 22h6v6h-6z" fill="#00a4ef" /><path d="M19 22h6v6h-6z" fill="#ffb900" /></Svg></TaskApp>
        <TaskApp label="Edge"><EdgeE size={32} /></TaskApp>
        <TaskApp label="3ds Max" active><span className="bg-[#d9eeee]"><MaxLogo size={36} /></span></TaskApp>
        <TaskApp label="百度网盘" active>
          <span className="flex h-9 w-9 flex-col items-center justify-between overflow-hidden rounded-lg bg-white">
            <BaiduMark size={34} />
            <span className="h-0.5 w-3 shrink-0 bg-[linear-gradient(90deg,#f4516c_50%,#3a6df0_50%)]" />
          </span>
        </TaskApp>
        <TaskApp label="截图工具" active><Svg w={34} h={34}><ellipse cx="13" cy="18" rx="12" ry="7" fill="#77706c" transform="rotate(-8 13 18)" /><ellipse cx="16" cy="10" rx="15" ry="7" fill="#f4f0f0" stroke="#d22" strokeWidth="1.500" transform="rotate(-18 16 10)" /><path d="M12 4l8 18M21 4l-3 18" stroke="#999" strokeWidth="1.500" /><ellipse cx="28" cy="22" rx="5" ry="3" stroke="#2893d8" strokeWidth="2" transform="rotate(25 28 22)" /><ellipse cx="21" cy="28" rx="3" ry="5" stroke="#2893d8" strokeWidth="2" /></Svg></TaskApp>
      </div>
      <span className="flex-1" />
      <p className="w-[90px] pt-1.5 text-center text-[17px] leading-6">54℃<br />CPU温度</p>
      <button aria-label="人脉" className="ml-[14px] mr-1 flex w-16 items-center justify-center"><Svg w={24} h={26}><g stroke="#fff" strokeWidth="1.500"><circle cx="16" cy="5" r="4" /><path d="M11 14c3-7 11-6 11 3" /><circle cx="7" cy="14" r="4" /><path d="M1 25c0-9 11-9 12 0" /></g></Svg></button>
      <div className="flex">
        <button aria-label="显示隐藏的图标" className={tray}><Svg w={18} h={10}><path d="M1 9l8-8 8 8" stroke="#fff" strokeWidth="1.500" /></Svg></button>
        <span className={tray}><Svg w={22} h={26}><ellipse cx="10" cy="13" rx="8" ry="9" fill="#111" /><circle cx="10" cy="6" r="5" fill="#222" /><path d="M8 4h2v3H8zM11 4h2v3h-2z" fill="#fff" /><path d="M13 0l6 2v4l-5-2z" fill="#f19" /><path d="M2 10h12l-1 3H8v3H3z" fill="#e1b" /><path d="M5 14h7v8H5z" fill="#eee" /><path d="M7 7h6l-3 3z" fill="#fa0" /><path d="M10 13h12v9H10z" fill="#fc5" /><path d="M2 24h7M12 24h6" stroke="#fa0" strokeWidth="3" /></Svg></span>
        <span className={tray}><Svg w={22} h={24}><path d="M11 0l10 6v12l-10 6-10-6V6z" fill="#1e8cf5" /><path d="M1 11l10 6 10-6M1 16l10 6 10-6" stroke="#fff" strokeWidth="2" /></Svg></span>
        <span className={tray}><Svg w={24} h={20}><path d="M1 1v4M5 1v4M0 6h6v3H0zM3 9v6h4" stroke="#fff" /><path d="M7 5h14v12H7z" fill="#fff" stroke="#fff" /><path d="M23 8v6" stroke="#fff" strokeWidth="2" /></Svg></span>
        <span className={tray}><Svg w={20} h={20}><path d="M1 19C1 8 9 1 19 1M6 19c0-8 6-13 13-13M11 19c0-5 3-8 8-8" stroke="#ccc" strokeWidth="1.500" /><circle cx="17" cy="17" r="2" fill="#fff" /></Svg></span>
        <span className={tray}><Svg w={24} h={20}><path d="M1 7h4l5-5v16l-5-5H1zM13 7c2 2 2 4 0 6M16 4c4 4 4 8 0 12M19 2c5 5 5 11 0 16" stroke="#fff" strokeWidth="1.300" /></Svg></span>
      </div>
      <span className="flex w-[46px] items-center justify-center"><Svg w={22} h={24}><path d="M7 20l1-6 6-12q3-2 4 1l-6 12zM9 9C-1 10-1 20 5 20c6-1 8-9 12-11 4-1 4 3 1 4" stroke="#fff" strokeWidth="1.500" /></Svg></span>
      <span className="flex w-[40px] items-center justify-center text-[18px]">中</span>
      <span className="flex w-[44px] items-center justify-center"><SogouS size={24} /></span>
      <p className="w-[126px] pt-0.5 text-center text-[18px] leading-7">20:22<br />2019/8/19</p>
      <button aria-label="通知" className="mr-[27px] flex w-12 items-center justify-center"><Svg w={24} h={26}><path d="M1 2h22v18h-6v5l-5-5H1z" stroke="#fff" strokeWidth="1.500" /></Svg></button>
    </div>
  );
}

export default function App() {
  return (
    <div className={`relative flex min-h-screen flex-col overflow-hidden bg-[#444] ${SANS}`}>
      <TitleBar />
      <MenuBar />
      <Toolbar />
      <Ribbon />
      <Workspace />
      <StatusBar />
      <Taskbar />
      <SaveDialog />
      <ImeBar />
      <div className="absolute right-0 top-0.5 z-20 flex h-[37px] w-[65px] rounded-l bg-[#1e9fff]">
        <span className="flex w-[45px] items-center justify-center"><BaiduMark size={34} mono /></span>
        <span className="flex-1 bg-[#c4eaff]" />
      </div>
      <div className="absolute bottom-[95px] right-px z-20 flex h-[68px] w-4 flex-col items-center justify-end rounded-t border-2 border-b-0 border-[#999] bg-[#11151a] pb-2">
        <span className="h-8 w-1 bg-[repeating-linear-gradient(#77771a_0_1px,#11151a_1px_3px)]" />
      </div>
      <p className="absolute bottom-1.5 right-2.5 z-30 font-['Liberation_Sans',sans-serif] text-base leading-6 text-white/60">https://blog.csdn.net/weixin_44996854</p>
    </div>
  );
}
